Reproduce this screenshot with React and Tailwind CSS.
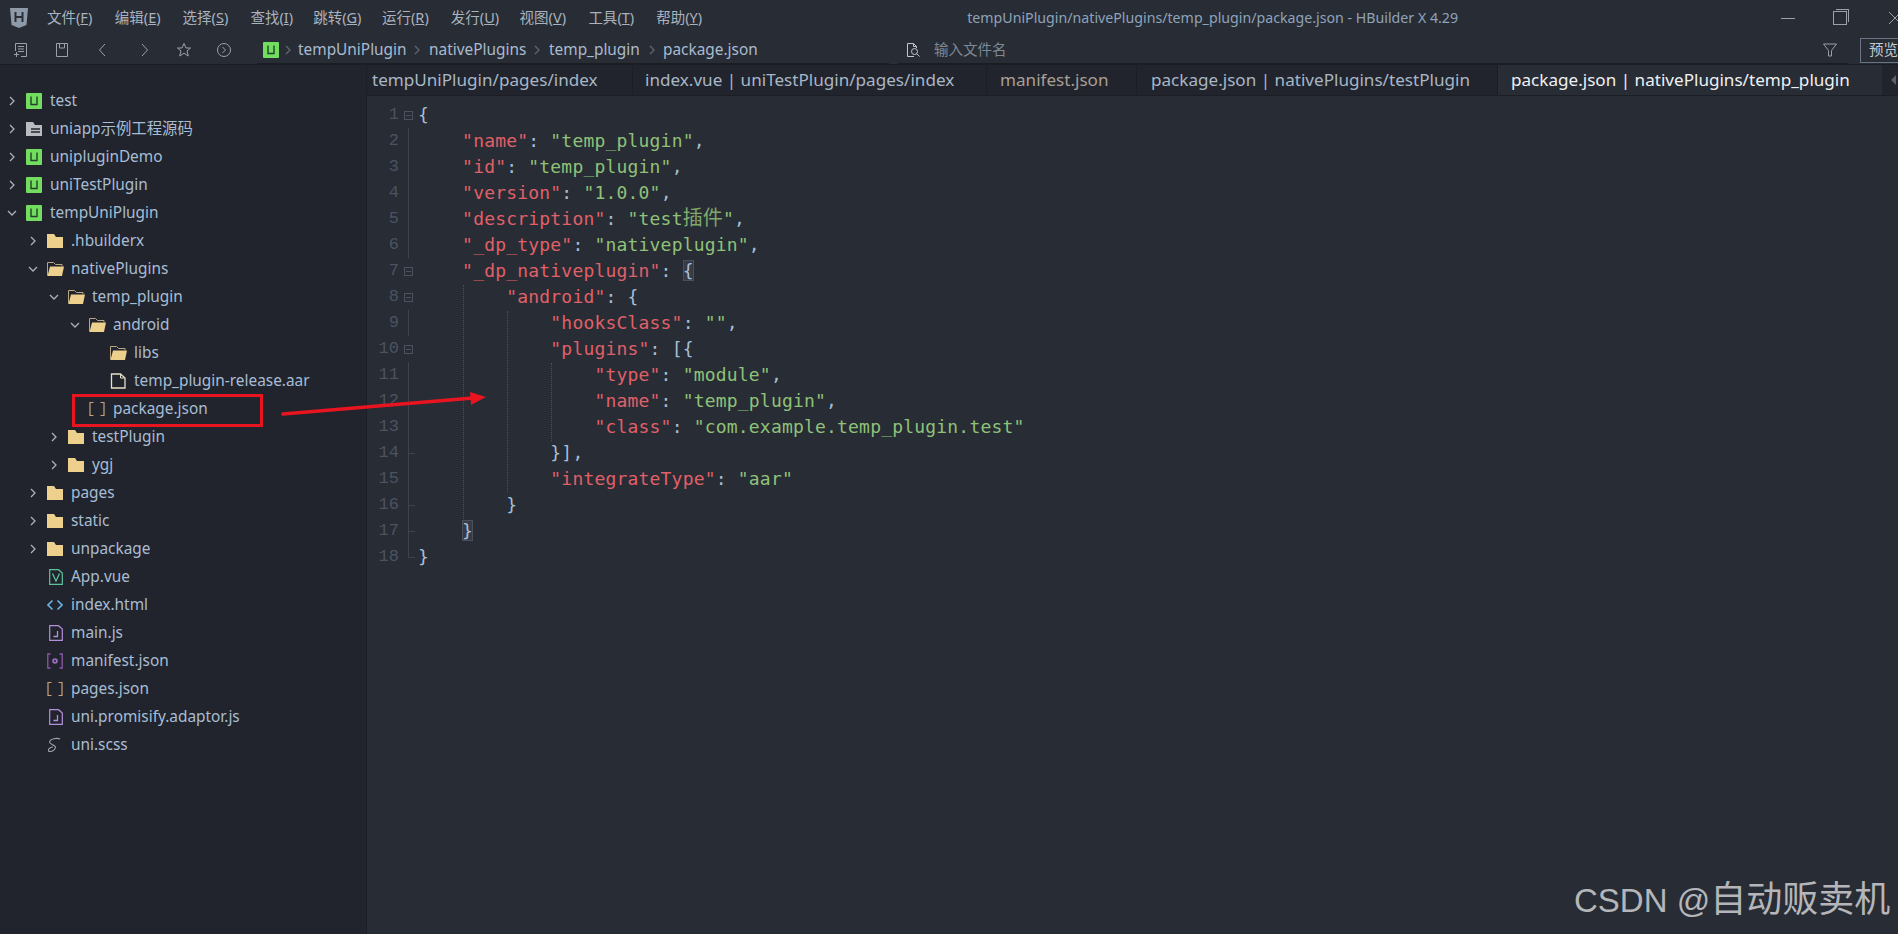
import React from 'react';

const ui = "font-['Noto_Sans','Noto_Sans_CJK_SC',sans-serif]";

const UIcon = () => (
  <svg width="16" height="16" viewBox="0 0 16 16" className="shrink-0">
    <rect width="16" height="16" rx="1" fill="#72dd5e" />
    <path d="M5 3.5V11.5H11V3.5" fill="none" stroke="#23402a" strokeWidth="1.4" />
  </svg>
);
const ChevR = ({ c = '#a9b2bd' }) => (
  <svg width="10" height="10" viewBox="0 0 10 10"><path d="M3 1l4 4-4 4" fill="none" stroke={c} strokeWidth="1.3" /></svg>
);
const ChevD = () => (
  <svg width="10" height="10" viewBox="0 0 10 10"><path d="M1 3l4 4 4-4" fill="none" stroke="#a9b2bd" strokeWidth="1.3" /></svg>
);
const FolderC = () => (
  <svg width="16" height="14" viewBox="0 0 16 14" className="shrink-0">
    <path d="M0 0H7L9 3H16V14H0Z" fill="#ecd08c" />
  </svg>
);
const FolderO = () => (
  <svg width="17" height="14" viewBox="0 0 17 14" className="shrink-0">
    <path d="M.5 13.5V.5H6.5L8.5 2.5H15V4" fill="none" stroke="#b5a781" strokeWidth="1" />
    <path d="M3 4.5H17L15 14H0.5Z" fill="#ecd08c" />
  </svg>
);
const ArchiveI = () => (
  <svg width="16" height="14" viewBox="0 0 16 14" className="shrink-0">
    <path d="M0 0H7L9 3H16V14H0Z" fill="#b9bcc0" />
    <path d="M5 7H14M5 10H14" stroke="#23262d" strokeWidth="1.5" />
  </svg>
);
const FileI = () => (
  <svg width="16" height="16" viewBox="0 0 16 16" className="shrink-0">
    <path d="M1.5 1H10.5L15 5V15H1.5Z" fill="none" stroke="#e7e0c6" strokeWidth="1.3" />
    <path d="M10.5 1V5H15" fill="none" stroke="#e7e0c6" strokeWidth="1" />
  </svg>
);
const JsonI = () => (
  <svg width="16" height="16" viewBox="0 0 16 16" className="shrink-0">
    <path d="M4.5 1.5H1V14.5H4.5M11.5 1.5H15V14.5H11.5" fill="none" stroke="#c9a27c" strokeWidth="1.2" />
  </svg>
);
const VueI = () => (
  <svg width="14" height="16" viewBox="0 0 14 16" className="shrink-0 ml-[2px]">
    <path d="M.7.7H9.5L13.3 4V15.3H.7Z" fill="none" stroke="#5cc39b" strokeWidth="1.2" />
    <path d="M3.5 4.5L7 12L10.5 4.5" fill="none" stroke="#5cc39b" strokeWidth="1.3" />
  </svg>
);
const HtmlI = () => (
  <svg width="16" height="12" viewBox="0 0 16 12" className="shrink-0">
    <path d="M5.5 1.5L1 6l4.5 4.5M10.5 1.5L15 6l-4.5 4.5" fill="none" stroke="#68b3e0" strokeWidth="1.6" />
  </svg>
);
const JsI = () => (
  <svg width="14" height="16" viewBox="0 0 14 16" className="shrink-0 ml-[2px]">
    <path d="M.7.7H9.5L13.3 4V15.3H.7Z" fill="none" stroke="#b48fdc" strokeWidth="1.2" />
    <path d="M8.5 6V11.5H4.5" fill="none" stroke="#b48fdc" strokeWidth="1.3" />
  </svg>
);
const ManI = () => (
  <svg width="16" height="16" viewBox="0 0 16 16" className="shrink-0">
    <path d="M3.5 1H.8V15H3.5M12.5 1H15.2V15H12.5" fill="none" stroke="#8a57a8" strokeWidth="1.3" />
    <circle cx="8" cy="8" r="2.8" fill="#9c6bc0" />
    <circle cx="8" cy="8" r="1" fill="#21242c" />
  </svg>
);
const ScssI = () => (
  <svg width="15" height="16" viewBox="0 0 15 16" className="shrink-0">
    <path d="M13 2C10 .5 3 2 2.5 5C2.5 7.5 9 8 8.5 10.5C8 13.5 3 15.5 1.5 14C.5 12 4 10 6 10" fill="none" stroke="#9da3ab" strokeWidth="1.1" />
  </svg>
);

const tree = [
  [0, 'r', <UIcon />, 'test'],
  [0, 'r', <ArchiveI />, 'uniapp示例工程源码'],
  [0, 'r', <UIcon />, 'unipluginDemo'],
  [0, 'r', <UIcon />, 'uniTestPlugin'],
  [0, 'd', <UIcon />, 'tempUniPlugin'],
  [1, 'r', <FolderC />, '.hbuilderx'],
  [1, 'd', <FolderO />, 'nativePlugins'],
  [2, 'd', <FolderO />, 'temp_plugin'],
  [3, 'd', <FolderO />, 'android'],
  [4, '', <FolderO />, 'libs'],
  [4, '', <FileI />, 'temp_plugin-release.aar'],
  [3, '', <JsonI />, 'package.json'],
  [2, 'r', <FolderC />, 'testPlugin'],
  [2, 'r', <FolderC />, 'ygj'],
  [1, 'r', <FolderC />, 'pages'],
  [1, 'r', <FolderC />, 'static'],
  [1, 'r', <FolderC />, 'unpackage'],
  [1, '', <VueI />, 'App.vue'],
  [1, '', <HtmlI />, 'index.html'],
  [1, '', <JsI />, 'main.js'],
  [1, '', <ManI />, 'manifest.json'],
  [1, '', <JsonI />, 'pages.json'],
  [1, '', <JsI />, 'uni.promisify.adaptor.js'],
  [1, '', <ScssI />, 'uni.scss'],
];
const pads = ['pl-[7px]', 'pl-[28px]', 'pl-[49px]', 'pl-[70px]', 'pl-[91px]'];

const menu = [['文件', 'F'], ['编辑', 'E'], ['选择', 'S'], ['查找', 'I'], ['跳转', 'G'], ['运行', 'R'], ['发行', 'U'], ['视图', 'V'], ['工具', 'T'], ['帮助', 'Y']];
const menuW = ['w-[49px]', 'w-[49px]', 'w-[49px]', 'w-[44px]', 'w-[50px]', 'w-[50px]', 'w-[50px]', 'w-[50px]', 'w-[49px]', 'w-[49px]'];

const K = ({ c }) => <span className="text-[#e06069]">{c}</span>;
const S = ({ c }) => <span className="text-[#8fc279]">{c}</span>;
const P = ({ c }) => <span className="text-[#a6bdd6]">{c}</span>;
const Cn = ({ c }) => <span className="text-[20px] leading-none font-['Noto_Sans_CJK_SC',sans-serif]">{c}</span>;
const Hl = ({ c }) => <span className="text-[#a6bdd6] bg-[#363b45] outline outline-1 outline-[#4a505b] -outline-offset-1">{c}</span>;

const kv = (ind, k, v, tail) => <>{ind}<K c={`"${k}"`} /><P c=": " /><S c={`"${v}"`} />{tail && <P c={tail} />}</>;

const code = [
  [<P c="{" />, 'box'],
  [kv('    ', 'name', 'temp_plugin', ','), 'line'],
  [kv('    ', 'id', 'temp_plugin', ','), 'line'],
  [kv('    ', 'version', '1.0.0', ','), 'line'],
  [<>{'    '}<K c={'"description"'} /><P c=": " /><S c={'"test'} /><span className="text-[#7fa96b]"><Cn c="插件" /></span><S c={'"'} /><P c="," /></>, 'line'],
  [kv('    ', '_dp_type', 'nativeplugin', ','), 'line'],
  [<>{'    '}<K c={'"_dp_nativeplugin"'} /><P c=": " /><Hl c="{" /></>, 'box'],
  [<>{'        '}<K c={'"android"'} /><P c=": {" /></>, 'box'],
  [kv('            ', 'hooksClass', '', ','), 'line'],
  [<>{'            '}<K c={'"plugins"'} /><P c=": [{" /></>, 'box'],
  [kv('                ', 'type', 'module', ','), 'line'],
  [kv('                ', 'name', 'temp_plugin', ','), 'line'],
  [kv('                ', 'class', 'com.example.temp_plugin.test'), 'line'],
  [<P c={'            }],'} />, 'tick'],
  [kv('            ', 'integrateType', 'aar'), 'line'],
  [<P c={'        }'} />, 'tick'],
  [<>{'    '}<Hl c="}" /></>, 'tick'],
  [<P c="}" />, 'end'],
];

const Fold = ({ t }) => {
  if (t === 'box') return (
    <div className="w-[9px] h-[9px] border border-[#4b515d] flex items-center justify-center">
      <div className="w-[5px] h-px bg-[#4b515d]" />
    </div>
  );
  if (t === 'line') return <div className="w-[9px] h-full flex justify-center"><div className="w-px h-full bg-[#3d424d]" /></div>;
  if (t === 'tick') return (
    <div className="w-[9px] h-full flex justify-center relative">
      <div className="w-px h-full bg-[#3d424d]" />
      <div className="absolute left-[4px] top-[13px] w-[7px] h-px bg-[#3d424d]" />
    </div>
  );
  return (
    <div className="w-[9px] h-full relative">
      <div className="absolute left-[4px] top-0 h-[14px] w-[7px] border-l border-b border-[#3d424d]" />
    </div>
  );
};

const tabs = [
  ['tempUniPlugin/pages/index', 'w-[266px] pl-[5px]', 'text-[#a8b6c6]'],
  ['index.vue | uniTestPlugin/pages/index', 'w-[354px] pl-[12px]', 'text-[#a8b6c6]'],
  ['manifest.json', 'w-[150px] pl-[13px]', 'text-[#a99f94]'],
  ['package.json | nativePlugins/testPlugin', 'w-[361px] pl-[14px]', 'text-[#a8b6c6]'],
];

const Stroke = ({ children, w = 16, h = 16, vb = '0 0 16 16', c = '#9aa1ab' }) => (
  <svg width={w} height={h} viewBox={vb} fill="none" stroke={c} strokeWidth="1">{children}</svg>
);

export default function App() {
  return (
    <div className={`relative w-[1898px] h-[934px] overflow-hidden bg-[#282c34] flex flex-col ${ui}`}>
      {/* title bar */}
      <div className="h-[36px] flex items-center shrink-0">
        <div className="w-[47px] pl-[10px] shrink-0">
          <svg width="18" height="20" viewBox="0 0 18 20">
            <path d="M0 0H18L16.5 17L9 20L1.5 17Z" fill="#8e9aa8" />
            <path d="M5.5 4V14M12.5 4V14M5.5 9H12.5" stroke="#2a2e36" strokeWidth="2" fill="none" />
          </svg>
        </div>
        <div className="flex gap-[18.8px]">
          {menu.map(([a, b], i) => (
            <div key={a} className={`${menuW[i]} text-[14.5px] text-[#a9b3bf] whitespace-nowrap`}>
              {a}(<span className="underline">{b}</span>)
            </div>
          ))}
        </div>
        <div className="ml-[262px] text-[14.2px] text-[#8ea3bb] whitespace-nowrap w-[534px]">tempUniPlugin/nativePlugins/temp_plugin/package.json - HBuilder X 4.29</div>
        <div className="ml-auto flex items-center">
          <div className="w-[14px] h-px bg-[#9aa1ab] mr-[38px]" />
          <div className="relative w-[14px] h-[14px] border border-[#9aa1ab] mr-[41px]">
            <div className="absolute -top-[3px] left-[2px] w-[13px] h-[13px] border-t border-r border-[#9aa1ab]" />
          </div>
          <div className="w-[10px] overflow-hidden">
            <Stroke w={14} h={14} vb="0 0 14 14"><path d="M1 1l12 12M13 1L1 13" /></Stroke>
          </div>
        </div>
      </div>
      {/* toolbar */}
      <div className="h-[29px] flex items-center shrink-0 border-b border-[#1a1d22]">
        <div className="w-[257px] pl-[13px] flex items-center shrink-0">
          <div className="w-[41px]"><Stroke><path d="M2.5 1.5H13.5V14.5H8M2.5 1.5V9M5 4.5H11M5 7H11M5 9.5H11M1 12.5H6M3.5 10V15" /></Stroke></div>
          <div className="w-[41px]"><Stroke><path d="M2.5 1.5H13.5V14.5H2.5ZM5.5 1.5V6H10.5V1.5" /></Stroke></div>
          <div className="w-[41px] pl-[1px]"><Stroke><path d="M10 2L4.5 8L10 14" /></Stroke></div>
          <div className="w-[41px] pl-[1px]"><Stroke><path d="M6 2L11.5 8L6 14" /></Stroke></div>
          <div className="w-[41px]"><Stroke><path d="M8 1.5L10 6H14.5L11 9L12.3 14L8 11.2L3.7 14L5 9L1.5 6H6Z" /></Stroke></div>
          <div className="w-[41px]"><Stroke><circle cx="8" cy="8" r="6.5" /><path d="M6.5 5L9.5 8L6.5 11" /></Stroke></div>
        </div>
        <div className="w-[632px] h-[28px] pl-[6px] flex items-center shrink-0 border-b border-[#1a1d22] text-[15.4px] text-[#a8bbd0]">
          <UIcon />
          <span className="ml-[4px] mr-[5px]"><ChevR c="#5f6773" /></span>
          <span className="w-[107px] whitespace-nowrap">tempUniPlugin</span>
          <span className="mx-[7px]"><ChevR c="#5f6773" /></span>
          <span className="w-[96px] whitespace-nowrap">nativePlugins</span>
          <span className="mx-[7px]"><ChevR c="#5f6773" /></span>
          <span className="w-[91px] whitespace-nowrap">temp_plugin</span>
          <span className="mx-[7px]"><ChevR c="#5f6773" /></span>
          <span className="whitespace-nowrap -ml-[1px]">package.json</span>
        </div>
        <div className="w-[950px] ml-[9px] h-[28px] pl-[7px] pr-[10px] flex items-center shrink-0 border-b border-[#1a1d22]">
          <Stroke c="#c2c7ce"><path d="M9 14.5H2.5V1.5H8.5L11.5 4.5V6M8.5 1.5V4.5H11.5" /><circle cx="9.5" cy="9.5" r="3" /><path d="M12 12L14.5 14.5" /></Stroke>
          <span className="ml-[13px] text-[14.5px] text-[#7f8995] whitespace-nowrap">输入文件名</span>
          <div className="ml-auto"><Stroke><path d="M1.5 2H14.5L9.5 8.5V14H6.5V8.5Z" /></Stroke></div>
        </div>
        <div className="ml-[12px] h-[25px] w-[60px] border border-[#6b7482] text-[14.5px] text-[#c4cad2] pl-[8px] flex items-center whitespace-nowrap shrink-0">预览</div>
      </div>
      {/* body */}
      <div className="flex flex-1 min-h-0">
        <aside className="w-[367px] shrink-0 bg-[#21242c] border-r border-[#1b1e24] pt-[22px]">
          {tree.map(([d, ch, ic, name]) => (
            <div key={name} className={`h-[28px] flex items-center ${pads[d]}`}>
              <div className="w-[10px] shrink-0 flex">{ch === 'r' ? <ChevR /> : ch === 'd' ? <ChevD /> : null}</div>
              <div className="w-[16px] ml-[9px] shrink-0 flex items-center justify-start">{ic}</div>
              <div className="ml-[8px] text-[15.4px] text-[#a8bdd4] whitespace-nowrap">{name}</div>
            </div>
          ))}
        </aside>
        <main className="flex-1 min-w-0 flex flex-col">
          <div className="h-[31px] flex shrink-0 bg-[#21242c] border-b border-[#1b1e24] text-[17.1px]">
            {tabs.map(([t, cls, col]) => (
              <div key={t} className={`${cls} ${col} h-full flex items-center whitespace-nowrap border-r border-[#1b1e24] shrink-0`}>{t}</div>
            ))}
            <div className="w-[384px] pl-[13px] bg-[#282c34] text-[#eef1f4] h-full flex items-center whitespace-nowrap shrink-0">package.json | nativePlugins/temp_plugin</div>
            <div className="flex-1 flex items-center justify-end pr-[1px]">
              <svg width="6" height="10" viewBox="0 0 6 10"><path d="M5 0V10L0 5Z" fill="#59606b" /></svg>
            </div>
          </div>
          <div className="relative pt-[6px] font-['DejaVu_Sans_Mono',monospace] text-[18px] leading-[26px]">
            <div className="absolute left-[96px] top-[189px] h-[234px] border-l border-dotted border-[#4a505b]" />
            <div className="absolute left-[140px] top-[215px] h-[182px] border-l border-dotted border-[#4a505b]" />
            <div className="absolute left-[184px] top-[267px] h-[78px] border-l border-dotted border-[#4a505b]" />
            {code.map(([c, t], i) => (
              <div key={i} className="flex h-[26px]">
                <div className="w-[32px] text-right text-[#4b5362] shrink-0 font-['Liberation_Mono',monospace] text-[17px]">{i + 1}</div>
                <div className="w-[19px] pl-[5px] flex items-center shrink-0"><Fold t={t} /></div>
                <div className="whitespace-pre tracking-[0.19px]">{c}</div>
              </div>
            ))}
          </div>
        </main>
      </div>
      {/* annotations */}
      <div className="absolute left-[72px] top-[394px] w-[191px] h-[33px] border-[3px] border-[#e8141f]" />
      <svg className="absolute left-[275px] top-[385px]" width="220" height="40" viewBox="0 0 220 40">
        <path d="M8 29L198 13" stroke="#e8141f" strokeWidth="3.5" strokeLinecap="round" />
        <path d="M195 7L211 12L196 20Z" fill="#e8141f" />
      </svg>
      <div className="absolute left-[1574px] top-[878px] text-[33px] leading-[44px] text-[#b4b6b9] whitespace-nowrap font-['Liberation_Sans','Noto_Sans_CJK_SC',sans-serif]">
        CSDN @<span className="text-[36px]">自动贩卖机</span>
      </div>
    </div>
  );
}
